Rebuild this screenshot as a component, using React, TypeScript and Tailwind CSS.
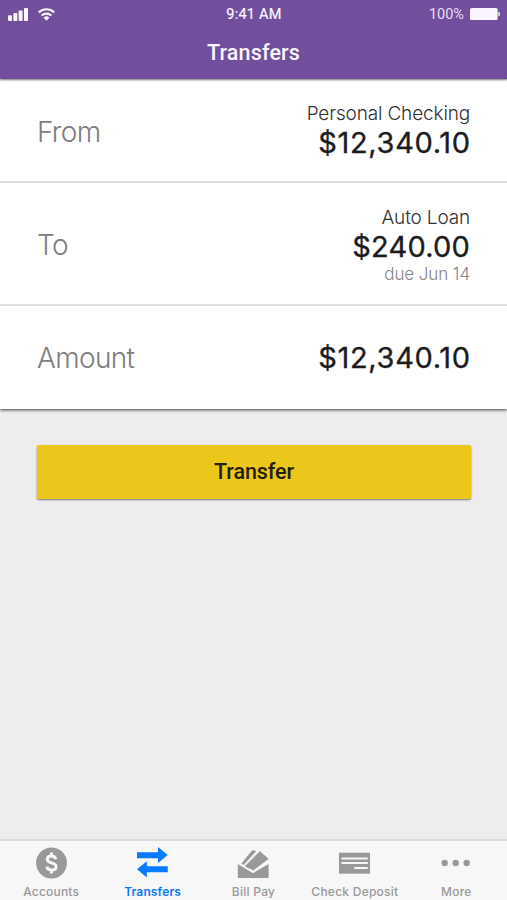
import React from 'react';

interface TransferRowProps {
  label: string;
  className: string;
  children: React.ReactNode;
}

const TransferRow: React.FC<TransferRowProps> = ({ label, className, children }) => (
  <div className={`flex items-center justify-between px-[37px] ${className}`}>
    <span className="text-[28px] leading-8 font-light tracking-[-0.65px] text-[#7d7d7d]">{label}</span>
    <div className="flex flex-col items-end whitespace-nowrap">{children}</div>
  </div>
);

const AccountsIcon = () => (
  <svg className="w-8 h-8" viewBox="0 0 32 32" fill="none">
    <circle cx="16.5" cy="16" r="15.4" fill="currentColor" />
    <path
      d="M20.8 12.2c-.5-2-2-3.1-4.3-3.1-2.5 0-4.2 1.2-4.2 3.2 0 2.1 1.7 2.9 4.2 3.6 2.7.7 4.6 1.6 4.6 3.8 0 2.1-1.8 3.3-4.5 3.3-2.6 0-4.3-1.2-4.8-3.4M16.5 5.5v3.5M16.5 23v3.5"
      stroke="#f7f7f7"
      strokeWidth="3"
    />
  </svg>
);

const TransfersIcon = () => (
  <svg className="w-8 h-8" viewBox="0 0 32 32" fill="currentColor">
    <path d="M1 5.2h21V0l9.8 8-9.8 8v-4.8H1zM31.8 25.2h-21V30.4L1 22.3l9.8-8v5h21z" />
  </svg>
);

const BillPayIcon = () => (
  <svg className="w-8 h-8" viewBox="0 0 32 32" fill="currentColor">
    <path d="M.8 17 16 26.2 31.6 17v14H.8z" />
    <path d="M8.2 19.2 22.8 4.6l8.4 7.2-14.8 11.2z" stroke="currentColor" strokeWidth=".8" strokeLinejoin="round" />
    <path d="M4.4 16.6 14.6 4c1.2-1.4 3.4-.9 4.4.6L6.6 17.9z" />
  </svg>
);

const CheckDepositIcon = () => (
  <svg className="w-8 h-8" viewBox="0 0 32 32" fill="currentColor">
    <path d="M0 5.7h31v21H0z" />
    <path d="M2.5 11.4h26.3M2.5 16.1h26.3M15.3 20.9h13.5" stroke="#f7f7f7" strokeWidth="2" />
  </svg>
);

const MoreIcon = () => (
  <svg className="w-8 h-8" viewBox="0 0 32 32" fill="currentColor">
    <circle cx="4.7" cy="16" r="3.2" />
    <circle cx="15.7" cy="16" r="3.2" />
    <circle cx="26.7" cy="16" r="3.2" />
  </svg>
);

const tabs = [
  { label: 'Accounts', icon: <AccountsIcon />, active: false, text: 'pl-px font-medium tracking-[0.2px]' },
  { label: 'Transfers', icon: <TransfersIcon />, active: true, text: 'pl-px font-semibold tracking-[0.15px]' },
  { label: 'Bill Pay', icon: <BillPayIcon />, active: false, text: 'font-medium tracking-[0.25px]' },
  { label: 'Check Deposit', icon: <CheckDepositIcon />, active: false, text: 'font-medium tracking-[0.25px]' },
  { label: 'More', icon: <MoreIcon />, active: false, text: 'font-medium tracking-[0.2px]' },
];

const StatusBar = () => (
  <div className="grid grid-cols-3 items-center h-7 pl-2 pr-[7px] text-[14.5px] leading-[26px]">
    <div className="flex items-center">
      <svg className="w-5 h-[13px]" viewBox="0 0 20 13" fill="currentColor">
        <rect x="0" y="7.2" width="4" height="5.8" rx="1" />
        <rect x="5.3" y="5" width="4" height="8" rx="1" />
        <rect x="10.6" y="2.6" width="4" height="10.4" rx="1" />
        <rect x="16" y="0" width="4" height="13" rx="1" />
      </svg>
      <svg className="w-[17px] h-[13px] ml-[10px]" viewBox="0 0 17 13" fill="none" stroke="currentColor">
        <path d="M.8 4.4a11 11 0 0 1 15.4 0" strokeWidth="2.2" />
        <path d="M3.6 7.6a7 7 0 0 1 9.8 0" strokeWidth="2.1" />
        <path d="m8.5 12.8-2.9-3.1a4.2 4.2 0 0 1 5.8 0z" fill="currentColor" stroke="none" />
      </svg>
    </div>
    <span className="pt-0.5 text-center font-normal tracking-[0.25px] [-webkit-text-stroke:0.2px]">9:41 AM</span>
    <div className="flex items-center justify-end">
      <span className="pt-0.5 text-[#e9def2]">100%</span>
      <svg className="w-[30px] h-3 ml-1.5" viewBox="0 0 30 12" fill="currentColor">
        <rect x="0" y="0" width="27.6" height="12" rx="1.6" />
        <path d="M28.3 3.8c1.1.2 1.7 1.1 1.7 2.2s-.6 2-1.7 2.2z" />
      </svg>
    </div>
  </div>
);

const App: React.FC = () => {
  return (
    <div className="flex flex-col w-full h-[900px] overflow-hidden bg-[#ededed] font-['Inter',sans-serif] text-[#1c1c1e]">
      <header className="relative h-[79px] shrink-0 bg-[#714f9d] text-[#fbf5ff] font-['Roboto',sans-serif] shadow-[0_1px_2px_rgba(0,0,0,0.55)]">
        <StatusBar />
        <h1 className="text-center text-[21.5px] leading-[50px] font-medium tracking-[0.15px]">Transfers</h1>
      </header>

      <main className="flex-1">
        <section className="h-[330px] bg-white shadow-[0_1px_3px_rgba(0,0,0,0.75)]">
          <TransferRow label="From" className="h-[104px] pt-[3px] border-b-2 border-[#dedede]">
            <span className="text-[19px] leading-6 font-light tracking-[-0.15px] text-[#303032]">Personal Checking</span>
            <span className="-mt-px text-[29px] leading-9 font-normal tracking-[0.65px] -mr-[0.65px] [-webkit-text-stroke:0.35px]">$12,340.10</span>
          </TransferRow>
          <TransferRow label="To" className="h-[123px] pt-[3px] border-b-2 border-[#dedede]">
            <span className="text-[19px] leading-6 font-light tracking-[-0.15px] text-[#303032]">Auto Loan</span>
            <span className="-mt-px text-[29px] leading-9 font-normal tracking-[0.2px] [-webkit-text-stroke:0.35px]">$240.00</span>
            <span className="text-[17px] leading-[19px] font-light tracking-[-0.1px] text-[#858585]">due Jun 14</span>
          </TransferRow>
          <TransferRow label="Amount" className="h-[103px] pt-px">
            <span className="text-[29px] leading-9 font-normal tracking-[0.65px] -mr-[0.65px] [-webkit-text-stroke:0.35px]">$12,340.10</span>
          </TransferRow>
        </section>

        <div className="pl-[37px] pr-9 pt-9">
          <button className="block w-full h-[54px] rounded-[2px] bg-[#ebc61b] text-[21.5px] leading-[54px] font-medium font-['Roboto',sans-serif] tracking-[-0.1px] text-[#241f10] shadow-[0_1px_2px_rgba(0,0,0,0.5)]">
            Transfer
          </button>
        </div>
      </main>

      <nav className="grid grid-cols-5 h-[61px] shrink-0 border-t-2 border-[#dcdcdc] bg-[#f7f7f7]">
        {tabs.map(tab => (
          <div
            key={tab.label}
            className={`flex flex-col items-center pt-1.5 whitespace-nowrap ${tab.active ? 'text-[#087aff]' : 'text-[#999999]'}`}
          >
            {tab.icon}
            <span className={`mt-[5px] text-[12px] leading-4 ${tab.text}`}>{tab.label}</span>
          </div>
        ))}
      </nav>
    </div>
  );
};

export default App;
